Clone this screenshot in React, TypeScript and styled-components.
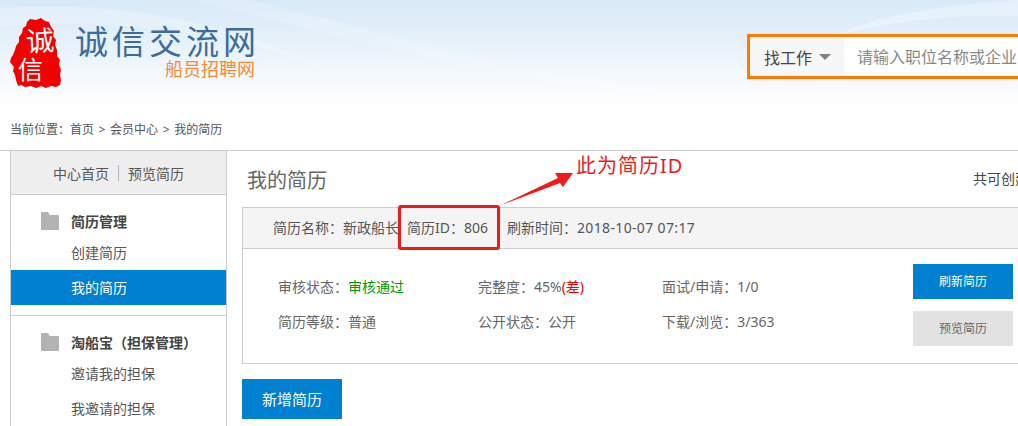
import React from 'react'
import styled, { createGlobalStyle } from 'styled-components'

const GlobalStyle = createGlobalStyle`
  html, body {
    margin: 0;
    padding: 0;
    background: #fff;
    overflow: hidden;
  }
  body {
    font-family: "Noto Sans", "Noto Sans CJK SC", sans-serif;
    color: #555;
  }
`

const Page = styled.div`
  position: relative;
  width: 1018px;
  height: 426px;
  overflow: hidden;
`

const Header = styled.header`
  position: relative;
  box-sizing: border-box;
  display: flex;
  width: 1018px;
  height: 118px;
  padding: 18px 0 0 10px;
  background: linear-gradient(180deg, #d8e9f8 0%, #e6f1fa 35%, #f6fafe 70%, #ffffff 92%);
  overflow: hidden;
`

const Waves = styled.svg`
  position: absolute;
  left: 0;
  top: 0;
  pointer-events: none;
`

const LogoBox = styled.div`
  position: relative;
  display: flex;
  flex: none;
  width: 737px;
  height: 70px;
`

const Seal = styled.div`
  position: relative;
  flex: none;
  width: 51px;
  height: 70px;
`

const SealChar = styled.span<{ $top: number; $left: number; $size: number; $tilt?: number }>`
  position: absolute;
  top: ${(p) => p.$top}px;
  left: ${(p) => p.$left}px;
  font-family: "Noto Sans CJK SC", sans-serif;
  font-size: ${(p) => p.$size}px;
  line-height: 1;
  color: #fff;
  transform: rotate(${(p) => p.$tilt ?? 0}deg);
`

const BrandText = styled.div`
  display: flex;
  flex-direction: column;
  margin-left: 14px;
  width: 180px;
`

const BrandName = styled.div`
  margin-top: 7px;
  font-size: 33px;
  line-height: 34px;
  height: 34px;
  letter-spacing: 4px;
  white-space: nowrap;
  color: #3c6c9c;
`

const BrandSub = styled.div`
  align-self: flex-end;
  font-size: 18px;
  line-height: 20px;
  white-space: nowrap;
  color: #f58a32;
`

const Search = styled.div`
  position: relative;
  display: flex;
  flex: none;
  box-sizing: border-box;
  width: 440px;
  height: 45px;
  margin-top: 16px;
  border: 3px solid #ff7b00;
  background: #fff;
`

const SearchType = styled.div`
  display: flex;
  align-items: center;
  flex: none;
  box-sizing: border-box;
  width: 94px;
  padding-left: 14px;
  background: #f7f7f7;
  font-size: 16px;
  color: #444;
`

const Caret = styled.i`
  margin-left: 7px;
  border-style: solid;
  border-width: 6px 6px 0;
  border-color: #808080 transparent transparent;
`

const Placeholder = styled.div`
  padding-left: 13px;
  font-size: 16px;
  line-height: 40px;
  white-space: nowrap;
  color: #888;
`

const Breadcrumb = styled.div`
  height: 32px;
  padding-left: 10px;
  font-size: 12px;
  line-height: 24px;
  word-spacing: 1.5px;
  color: #555;
`

const Body = styled.div`
  display: flex;
  width: 1200px;
  height: 276px;
  border-top: 1px solid #d0d0d0;
`

const Sidebar = styled.aside`
  flex: none;
  box-sizing: border-box;
  width: 217px;
  margin-left: 10px;
  border-left: 1px solid #ccc;
  border-right: 1px solid #ccc;
`

const SideHead = styled.div`
  display: flex;
  align-items: center;
  justify-content: center;
  gap: 9px;
  height: 43px;
  border-bottom: 1px solid #ccc;
  background: #eee;
  font-size: 14px;
  color: #555;
`

const Pipe = styled.span`
  width: 1px;
  height: 16px;
  background: #a9b4c4;
`

const Group = styled.div<{ $last?: boolean }>`
  padding: 12px 0 10px;
  border-bottom: ${(p) => (p.$last ? 'none' : '1px solid #ccc')};
`

const GroupTitle = styled.div`
  display: flex;
  align-items: center;
  height: 28px;
  padding-left: 30px;
  font-size: 14px;
  font-weight: 700;
  color: #444;
`

const FolderIcon = styled.svg`
  flex: none;
  margin-right: 12px;
`

const NavItem = styled.div<{ $active?: boolean }>`
  height: 35px;
  padding-left: 60px;
  font-size: 14px;
  line-height: 35px;
  color: ${(p) => (p.$active ? '#fff' : '#555')};
  background: ${(p) => (p.$active ? '#0080d0' : 'transparent')};
`

const Content = styled.main`
  flex: 1;
  padding: 0 0 0 15px;
`

const TitleRow = styled.div`
  display: flex;
  justify-content: space-between;
  height: 56px;
`

const PageTitle = styled.h1`
  margin: 14px 0 0 5px;
  font-size: 20px;
  font-weight: 400;
  line-height: 32px;
  color: #666;
`

const Quota = styled.div`
  margin: 16px 25px 0 0;
  width: 202px;
  font-size: 14px;
  line-height: 24px;
  white-space: nowrap;
  color: #444;
`

const Card = styled.section`
  box-sizing: border-box;
  width: 900px;
  height: 157px;
  border: 1px solid #ccc;
`

const CardHead = styled.div`
  display: flex;
  align-items: center;
  box-sizing: border-box;
  height: 41px;
  padding: 0 0 2px 30px;
  border-bottom: 1px solid #ccc;
  background: #f4f4f4;
  font-size: 14px;
  color: #555;
`

const HeadField = styled.span<{ $width: number }>`
  flex: none;
  width: ${(p) => p.$width}px;
  white-space: nowrap;
`

const DateValue = styled.span`
  letter-spacing: 0.35px;
`

const CardBody = styled.div`
  display: flex;
  justify-content: space-between;
  padding: 15px 0 0 35px;
`

const Stats = styled.div`
  display: grid;
  grid-template-columns: 200px 184px 200px;
  grid-auto-rows: 35px;
  padding-top: 5px;
  font-size: 14px;
  line-height: 35px;
  color: #666;
`

const Ok = styled.span`
  color: #009a00;
`

const Bad = styled.span`
  color: #e00;
`

const Actions = styled.div`
  display: flex;
  flex-direction: column;
  gap: 12px;
  margin-right: 128px;
`

const Button = styled.div<{ $muted?: boolean }>`
  width: 100px;
  height: 35px;
  font-size: 12px;
  line-height: 35px;
  text-align: center;
  color: ${(p) => (p.$muted ? '#666' : '#fff')};
  background: ${(p) => (p.$muted ? '#e2e2e2' : '#0080d0')};
`

const AddButton = styled.div`
  width: 100px;
  height: 40px;
  margin-top: 15px;
  font-size: 15px;
  line-height: 40px;
  text-align: center;
  color: #fff;
  background: #0080d0;
`

const IdMark = styled.div`
  position: absolute;
  left: 398px;
  top: 205px;
  box-sizing: border-box;
  width: 102px;
  height: 45px;
  border: 3px solid #f01a1a;
  border-radius: 3px;
`

const IdArrow = styled.svg`
  position: absolute;
  left: 498px;
  top: 165px;
`

const IdNote = styled.div`
  position: absolute;
  left: 576px;
  top: 151px;
  font-size: 20px;
  line-height: 30px;
  letter-spacing: 1px;
  white-space: nowrap;
  color: #f01a1a;
`

function Folder() {
  return (
    <FolderIcon width="18" height="18" viewBox="0 0 18 18">
      <path d="M0 1.5C0 .7.5 0 1.2 0H6.5c.6 0 1 .3 1.3.9L8.5 3H17c.6 0 1 .4 1 1v13c0 .6-.4 1-1 1H1c-.6 0-1-.4-1-1Z" fill="#b3b3b3" />
    </FolderIcon>
  )
}

export default function App() {
  return (
    <Page>
      <GlobalStyle />
      <Header>
        <Waves width="1018" height="118" viewBox="0 0 1018 118">
          <path d="M0 8C120 0 220 20 330 70 230 32 120 18 0 26Z" fill="#fff" opacity="0.22" />
          <path d="M250 0C420 40 560 90 790 98 600 110 400 50 190 0Z" fill="#fff" opacity="0.16" />
          <path d="M840 34C880 14 950 4 1018 0V16C950 14 890 22 840 34Z" fill="#fff" opacity="0.3" />
        </Waves>
        <LogoBox>
          <Seal>
            <svg width="51" height="70" viewBox="0 0 51 70">
              <path
                d="M20 1L26 2L31 0L35 3L39 4L41 9L44 13L43 18L46 22L45 27L47 32L47 38L50 42L49 47L51 52L50 57L51 62L50 67L46 69L41 68L36 70L31 68L26 70L21 68L15 69L11 67L8 68L6 62L5 57L3 53L4 49L0 44L1 40L3 37L5 32L6 28L9 24L9 19L12 15L13 10L16 8L17 4Z"
                fill="#f50000"
              />
            </svg>
            <SealChar $top={7} $left={16} $size={28} $tilt={-4}>诚</SealChar>
            <SealChar $top={38} $left={8} $size={25}>信</SealChar>
          </Seal>
          <BrandText>
            <BrandName>诚信交流网</BrandName>
            <BrandSub>船员招聘网</BrandSub>
          </BrandText>
        </LogoBox>
        <Search>
          <SearchType>
            找工作
            <Caret />
          </SearchType>
          <Placeholder>请输入职位名称或企业名称</Placeholder>
        </Search>
      </Header>
      <Breadcrumb>当前位置&#xFF1A;首页 &gt; 会员中心 &gt; 我的简历</Breadcrumb>
      <Body>
        <Sidebar>
          <SideHead>
            <span>中心首页</span>
            <Pipe />
            <span>预览简历</span>
          </SideHead>
          <Group>
            <GroupTitle>
              <Folder />
              简历管理
            </GroupTitle>
            <NavItem>创建简历</NavItem>
            <NavItem $active>我的简历</NavItem>
          </Group>
          <Group $last>
            <GroupTitle>
              <Folder />
              淘船宝&#xFF08;担保管理&#xFF09;
            </GroupTitle>
            <NavItem>邀请我的担保</NavItem>
            <NavItem>我邀请的担保</NavItem>
          </Group>
        </Sidebar>
        <Content>
          <TitleRow>
            <PageTitle>我的简历</PageTitle>
            <Quota>共可创建5份简历</Quota>
          </TitleRow>
          <Card>
            <CardHead>
              <HeadField $width={134}>简历名称&#xFF1A;新政船长</HeadField>
              <HeadField $width={100}>简历ID&#xFF1A;806</HeadField>
              <HeadField $width={260}>
                刷新时间&#xFF1A;<DateValue>2018-10-07 07:17</DateValue>
              </HeadField>
            </CardHead>
            <CardBody>
              <Stats>
                <span>审核状态&#xFF1A;<Ok>审核通过</Ok></span>
                <span>完整度&#xFF1A;45%<Bad>(差)</Bad></span>
                <span>面试/申请&#xFF1A;1/0</span>
                <span>简历等级&#xFF1A;普通</span>
                <span>公开状态&#xFF1A;公开</span>
                <span>下载/浏览&#xFF1A;3/363</span>
              </Stats>
              <Actions>
                <Button>刷新简历</Button>
                <Button $muted>预览简历</Button>
              </Actions>
            </CardBody>
          </Card>
          <AddButton>新增简历</AddButton>
        </Content>
      </Body>
      <IdMark />
      <IdArrow width="76" height="44" viewBox="0 0 76 44">
        <path d="M3 40L60 13 57 8 75 8 65 22 62 18Z" fill="#f01a1a" />
      </IdArrow>
      <IdNote>此为简历ID</IdNote>
    </Page>
  )
}
